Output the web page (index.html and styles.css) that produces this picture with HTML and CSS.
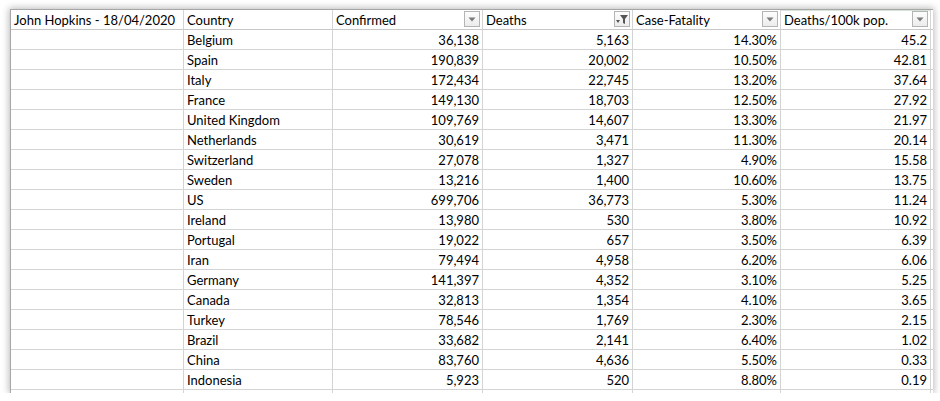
FILE: index.html
```html
<!DOCTYPE html>
<html>
<head>
<meta charset="utf-8">
<link rel="stylesheet" href="styles.css">
</head>
<body>
<div class="sheet">
  <div class="row head">
    <div class="cell">John Hopkins - 18/04/2020</div>
    <div class="cell">Country</div>
    <div class="cell hf">Confirmed<span class="dd"><svg width="8" height="5" viewBox="0 0 8 5"><path d="M0.5 0.5h7l-3.5 4z" fill="#7a7a7a"/></svg></span></div>
    <div class="cell hf">Deaths<span class="dd"><svg width="12" height="11" viewBox="0 0 12 11"><path d="M4 1h8l-3 4v5l-2-1v-4z" fill="#555"/><path d="M0 6h4l-2 3z" fill="#555"/></svg></span></div>
    <div class="cell hf">Case-Fatality<span class="dd"><svg width="8" height="5" viewBox="0 0 8 5"><path d="M0.5 0.5h7l-3.5 4z" fill="#7a7a7a"/></svg></span></div>
    <div class="cell hf sel">Deaths/100k pop.<span class="dd"><svg width="8" height="5" viewBox="0 0 8 5"><path d="M0.5 0.5h7l-3.5 4z" fill="#7a7a7a"/></svg></span></div>
    <div class="cell"></div>
  </div>
  <div class="row"><div class="cell"></div><div class="cell">Belgium</div><div class="cell n">36,138</div><div class="cell n">5,163</div><div class="cell n">14.30%</div><div class="cell n">45.2</div><div class="cell"></div></div>
  <div class="row"><div class="cell"></div><div class="cell">Spain</div><div class="cell n">190,839</div><div class="cell n">20,002</div><div class="cell n">10.50%</div><div class="cell n">42.81</div><div class="cell"></div></div>
  <div class="row"><div class="cell"></div><div class="cell">Italy</div><div class="cell n">172,434</div><div class="cell n">22,745</div><div class="cell n">13.20%</div><div class="cell n">37.64</div><div class="cell"></div></div>
  <div class="row"><div class="cell"></div><div class="cell">France</div><div class="cell n">149,130</div><div class="cell n">18,703</div><div class="cell n">12.50%</div><div class="cell n">27.92</div><div class="cell"></div></div>
  <div class="row"><div class="cell"></div><div class="cell">United Kingdom</div><div class="cell n">109,769</div><div class="cell n">14,607</div><div class="cell n">13.30%</div><div class="cell n">21.97</div><div class="cell"></div></div>
  <div class="row"><div class="cell"></div><div class="cell">Netherlands</div><div class="cell n">30,619</div><div class="cell n">3,471</div><div class="cell n">11.30%</div><div class="cell n">20.14</div><div class="cell"></div></div>
  <div class="row"><div class="cell"></div><div class="cell">Switzerland</div><div class="cell n">27,078</div><div class="cell n">1,327</div><div class="cell n">4.90%</div><div class="cell n">15.58</div><div class="cell"></div></div>
  <div class="row"><div class="cell"></div><div class="cell">Sweden</div><div class="cell n">13,216</div><div class="cell n">1,400</div><div class="cell n">10.60%</div><div class="cell n">13.75</div><div class="cell"></div></div>
  <div class="row"><div class="cell"></div><div class="cell">US</div><div class="cell n">699,706</div><div class="cell n">36,773</div><div class="cell n">5.30%</div><div class="cell n">11.24</div><div class="cell"></div></div>
  <div class="row"><div class="cell"></div><div class="cell">Ireland</div><div class="cell n">13,980</div><div class="cell n">530</div><div class="cell n">3.80%</div><div class="cell n">10.92</div><div class="cell"></div></div>
  <div class="row"><div class="cell"></div><div class="cell">Portugal</div><div class="cell n">19,022</div><div class="cell n">657</div><div class="cell n">3.50%</div><div class="cell n">6.39</div><div class="cell"></div></div>
  <div class="row"><div class="cell"></div><div class="cell">Iran</div><div class="cell n">79,494</div><div class="cell n">4,958</div><div class="cell n">6.20%</div><div class="cell n">6.06</div><div class="cell"></div></div>
  <div class="row"><div class="cell"></div><div class="cell">Germany</div><div class="cell n">141,397</div><div class="cell n">4,352</div><div class="cell n">3.10%</div><div class="cell n">5.25</div><div class="cell"></div></div>
  <div class="row"><div class="cell"></div><div class="cell">Canada</div><div class="cell n">32,813</div><div class="cell n">1,354</div><div class="cell n">4.10%</div><div class="cell n">3.65</div><div class="cell"></div></div>
  <div class="row"><div class="cell"></div><div class="cell">Turkey</div><div class="cell n">78,546</div><div class="cell n">1,769</div><div class="cell n">2.30%</div><div class="cell n">2.15</div><div class="cell"></div></div>
  <div class="row"><div class="cell"></div><div class="cell">Brazil</div><div class="cell n">33,682</div><div class="cell n">2,141</div><div class="cell n">6.40%</div><div class="cell n">1.02</div><div class="cell"></div></div>
  <div class="row"><div class="cell"></div><div class="cell">China</div><div class="cell n">83,760</div><div class="cell n">4,636</div><div class="cell n">5.50%</div><div class="cell n">0.33</div><div class="cell"></div></div>
  <div class="row"><div class="cell"></div><div class="cell">Indonesia</div><div class="cell n">5,923</div><div class="cell n">520</div><div class="cell n">8.80%</div><div class="cell n">0.19</div><div class="cell"></div></div>
  <div class="row"><div class="cell"></div><div class="cell"></div><div class="cell"></div><div class="cell"></div><div class="cell"></div><div class="cell"></div><div class="cell"></div></div>
</div>
</body>
</html>
```
FILE: styles.css
```css
html, body {
  margin: 0;
  padding: 0;
  background: #ffffff;
}
body {
  padding: 9px 0 0 10px;
}
.sheet {
  width: 923px;
  height: 384px;
  overflow: hidden;
  border-top: 1px solid #a6a6a6;
  border-left: 1px solid #a6a6a6;
  box-sizing: border-box;
  box-shadow: 0 0 7px 1px rgba(0, 0, 0, 0.28);
  font-family: "Lato", "Liberation Sans", sans-serif;
  font-size: 13px;
  color: #000;
  background: #fff;
}
.row {
  display: grid;
  grid-template-columns: 173px 149px 150px 150px 148px 150px 40px;
  height: 20px;
}
.cell {
  box-sizing: border-box;
  border-right: 1px solid #d4d4d4;
  border-bottom: 1px solid #d4d4d4;
  height: 20px;
  line-height: 19px;
  padding: 1px 3px 0 3px;
  white-space: nowrap;
  overflow: hidden;
  position: relative;
}
.head .cell {
  border-bottom-color: #c8c8c8;
}
.n {
  text-align: right;
  padding-right: 3px;
}
.sel {
  box-shadow: inset 0 1px 0 #d7e4d9;
}
.dd {
  position: absolute;
  right: 2px;
  top: 1px;
  width: 16px;
  height: 16px;
  box-sizing: border-box;
  border: 1px solid #b4b4b4;
  background: linear-gradient(#fdfdfd, #ececec);
  display: flex;
  align-items: center;
  justify-content: center;
}
```
